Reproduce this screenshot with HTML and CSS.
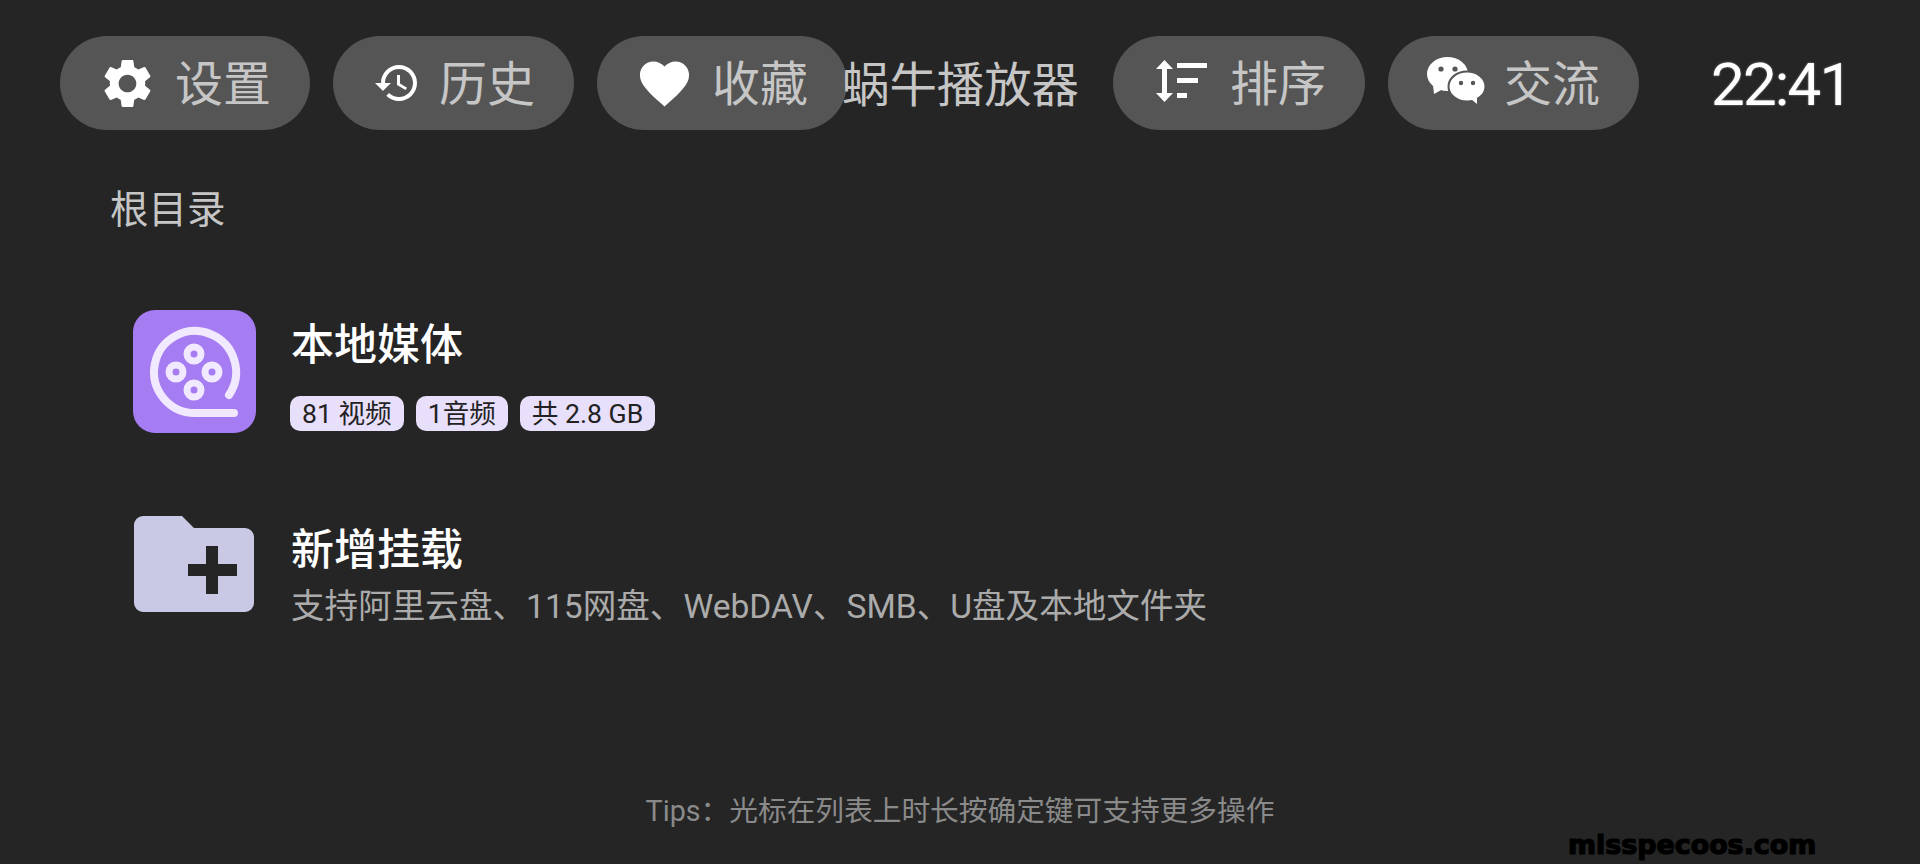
FILE: index.html
```html
<!DOCTYPE html>
<html lang="zh-CN">
<head>
<meta charset="utf-8">
<title>蜗牛播放器</title>
<link rel="stylesheet" href="styles.css">
</head>
<body>
<div class="page">
  <header class="topbar">
    <div class="pill">
      <svg class="icon icon-gear" viewBox="0 0 24 24"><path d="M19.14 12.94c.04-.3.06-.61.06-.94 0-.32-.02-.64-.07-.94l2.03-1.58c.18-.14.23-.41.12-.61l-1.92-3.32c-.12-.22-.37-.29-.59-.22l-2.39.96c-.5-.38-1.03-.7-1.62-.94l-.36-2.54c-.04-.24-.24-.41-.48-.41h-3.84c-.24 0-.43.17-.47.41l-.36 2.54c-.59.24-1.13.57-1.62.94l-2.39-.96c-.22-.08-.47 0-.59.22L2.74 8.87c-.12.21-.08.47.12.61l2.03 1.58c-.05.3-.09.63-.09.94s.02.64.07.94l-2.03 1.58c-.18.14-.23.41-.12.61l1.92 3.32c.12.22.37.29.59.22l2.39-.96c.5.38 1.03.7 1.62.94l.36 2.54c.05.24.24.41.48.41h3.84c.24 0 .44-.17.47-.41l.36-2.54c.59-.24 1.13-.56 1.62-.94l2.39.96c.22.08.47 0 .59-.22l1.92-3.32c.12-.22.07-.47-.12-.61l-2.01-1.58zM12 15.6c-1.98 0-3.6-1.62-3.6-3.6s1.62-3.6 3.6-3.6 3.6 1.62 3.6 3.6-1.62 3.6-3.6 3.6z"/></svg>
      <span class="pill-label">设置</span>
    </div>
    <div class="pill">
      <svg class="icon icon-history" viewBox="0 0 24 24"><path d="M13 3c-4.97 0-9 4.03-9 9H1l3.89 3.89.07.14L9 12H6c0-3.87 3.13-7 7-7s7 3.13 7 7-3.13 7-7 7c-1.93 0-3.68-.79-4.94-2.06l-1.42 1.42C8.27 19.99 10.51 21 13 21c4.97 0 9-4.03 9-9s-4.03-9-9-9zm-1 5v5l4.28 2.54.72-1.21-3.5-2.08V8H12z"/></svg>
      <span class="pill-label">历史</span>
    </div>
    <div class="pill">
      <svg class="icon icon-heart" viewBox="0 0 24 24"><path d="M12 21.35l-1.45-1.32C5.4 15.36 2 12.28 2 8.5 2 5.42 4.42 3 7.5 3c1.74 0 3.41.81 4.5 2.09C13.09 3.81 14.76 3 16.5 3 19.58 3 22 5.42 22 8.5c0 3.78-3.4 6.86-8.55 11.54L12 21.35z"/></svg>
      <span class="pill-label">收藏</span>
    </div>
    <h1 class="app-title">蜗牛播放器</h1>
    <div class="pill">
      <svg class="icon icon-sort" viewBox="0 0 51 42"><path d="M8.5 0 17 9H11V33H17L8.5 42 0 33H6V9H0Z"/><rect x="21" y="3" width="30" height="5"/><rect x="21" y="18" width="21" height="5"/><rect x="21" y="33" width="10" height="5"/></svg>
      <span class="pill-label">排序</span>
    </div>
    <div class="pill">
      <svg class="icon icon-wechat" viewBox="0 0 58 47">
        <ellipse cx="20.5" cy="17" rx="20.5" ry="17"/>
        <path d="M6 28 7 37 16 32Z"/>
        <ellipse class="bubble-front" cx="40" cy="29.5" rx="18.5" ry="15"/>
        <path d="M44 42 50 47 50 40Z"/>
        <circle class="eye" cx="14" cy="12" r="2.6"/>
        <circle class="eye" cx="28" cy="12" r="2.6"/>
        <circle class="eye" cx="34" cy="26" r="2.2"/>
        <circle class="eye" cx="46" cy="26" r="2.2"/>
      </svg>
      <span class="pill-label">交流</span>
    </div>
    <div class="clock">22:41</div>
  </header>

  <main class="content">
    <div class="crumb">根目录</div>
    <section class="row row-media">
      <svg class="row-icon" viewBox="0 0 123 123">
        <rect class="media-bg" width="123" height="123" rx="22"/>
        <path class="media-line" d="M96 85A41 41 0 1 0 62 103H101"/>
        <circle class="media-reel" cx="61" cy="44" r="7"/>
        <circle class="media-reel" cx="43" cy="62" r="7"/>
        <circle class="media-reel" cx="79" cy="62" r="7"/>
        <circle class="media-reel" cx="61" cy="80" r="7"/>
      </svg>
      <div class="row-text">
        <div class="row-title">本地媒体</div>
        <div class="tags">
          <span class="tag">81 视频</span>
          <span class="tag">1音频</span>
          <span class="tag">共 2.8 GB</span>
        </div>
      </div>
    </section>
    <section class="row row-mount">
      <svg class="row-icon" viewBox="-1 0 123 96">
        <path class="folder" d="M9 0H48L60 12H111A9 9 0 0 1 120 21V87A9 9 0 0 1 111 96H9A9 9 0 0 1 0 87V9A9 9 0 0 1 9 0Z"/>
        <path class="folder-plus" d="M72 30H84V48H103V60H84V78H72V60H54V48H72Z"/>
      </svg>
      <div class="row-text">
        <div class="row-title">新增挂载</div>
        <div class="row-sub">支持阿里云盘、115网盘、WebDAV、SMB、U盘及本地文件夹</div>
      </div>
    </section>
  </main>

  <footer class="tips">Tips：光标在列表上时长按确定键可支持更多操作</footer>
  <div class="watermark">misspecoos.com</div>
</div>
</body>
</html>
```
FILE: styles.css
```css
* { box-sizing: border-box; }
html, body { margin: 0; padding: 0; }
body {
  background: #252525;
  font-family: Roboto, "Noto Sans CJK SC", sans-serif;
  color: #c6c6c6;
}
.page {
  position: relative;
  width: 1920px;
  height: 864px;
  overflow: hidden;
  display: flex;
  flex-direction: column;
}
.topbar {
  display: flex;
  align-items: center;
  height: 94px;
  margin: 36px 0 0 60px;
}
.pill {
  flex: none;
  display: flex;
  align-items: center;
  height: 94px;
  margin-right: 23px;
  padding: 0 40px 0 38px;
  border-radius: 47px;
  background: #555555;
  gap: 17px;
}
.pill-label {
  width: 95px;
  padding-top: 4px;
  font-size: 48px;
  line-height: 90px;
  white-space: nowrap;
}
.icon { flex: none; fill: #fff; }
.icon-gear { width: 59px; height: 59px; margin-right: 1px; }
.icon-history { width: 48px; height: 48px; margin: 0 1px 0 2px; }
.icon-heart { width: 59px; height: 59px; margin-right: 1px; }
.icon-sort { width: 51px; height: 42px; margin: 0 6px 4px 5px; }
.icon-wechat { width: 58px; height: 47px; margin: 0 2px 6px 1px; }
.bubble-front { stroke: #555555; stroke-width: 2; }
.eye { fill: #555555; }
.app-title {
  flex: none;
  margin: 0 34px 0 -28px;
  padding-top: 6px;
  font-size: 47.4px;
  font-weight: 400;
  line-height: 88px;
  color: #c6c6c6;
}
.clock {
  margin-left: 49px;
  padding-top: 4px;
  font-size: 60px;
  letter-spacing: -1.8px;
  line-height: 90px;
  color: #fff;
  text-shadow: 0 0 2px rgba(255, 255, 255, 0.6);
}
.content {
  display: flex;
  flex-direction: column;
  padding-left: 110px;
}
.crumb {
  margin-top: 55px;
  font-size: 38.5px;
  line-height: 50px;
}
.row {
  display: flex;
  gap: 35px;
  margin-left: 23px;
}
.row-media { margin-top: 75px; height: 123px; }
.row-mount { margin-top: 83px; height: 114px; }
.row-icon { flex: none; width: 123px; }
.row-media .row-icon { height: 123px; }
.row-mount .row-icon { height: 96px; }
.row-text { display: flex; flex-direction: column; }
.row-media .row-text { padding-top: 7px; }
.row-mount .row-text { padding-top: 6px; }
.row-title {
  font-size: 43px;
  font-weight: 500;
  line-height: 56px;
  color: #fff;
}
.media-bg { fill: #a67cf3; }
.media-line { fill: none; stroke: #f1e9ff; stroke-width: 8; stroke-linecap: round; stroke-linejoin: round; }
.media-reel { fill: #a67cf3; stroke: #f1e9ff; stroke-width: 7; }
.tags { display: flex; gap: 12px; margin: 23px 0 0 -1px; }
.tag {
  height: 35px;
  padding: 0 12px;
  border-radius: 10px;
  background: #e8dffb;
  color: #222;
  font-size: 26.6px;
  line-height: 35px;
  white-space: nowrap;
}
.folder { fill: #c9c9e6; }
.folder-plus { fill: #252525; }
.row-sub {
  margin-top: 6px;
  font-size: 33.6px;
  line-height: 46px;
  color: #ababab;
}
.tips {
  margin-top: auto;
  padding-bottom: 33px;
  text-align: center;
  font-size: 28.7px;
  line-height: 40px;
  color: #8a8a8a;
}
.watermark {
  position: absolute;
  left: 1568px;
  top: 828px;
  font-family: "DejaVu Sans", sans-serif;
  font-weight: 700;
  font-size: 26.9px;
  line-height: 34px;
  color: #000;
  -webkit-text-stroke: 1.2px #000;
}
```
